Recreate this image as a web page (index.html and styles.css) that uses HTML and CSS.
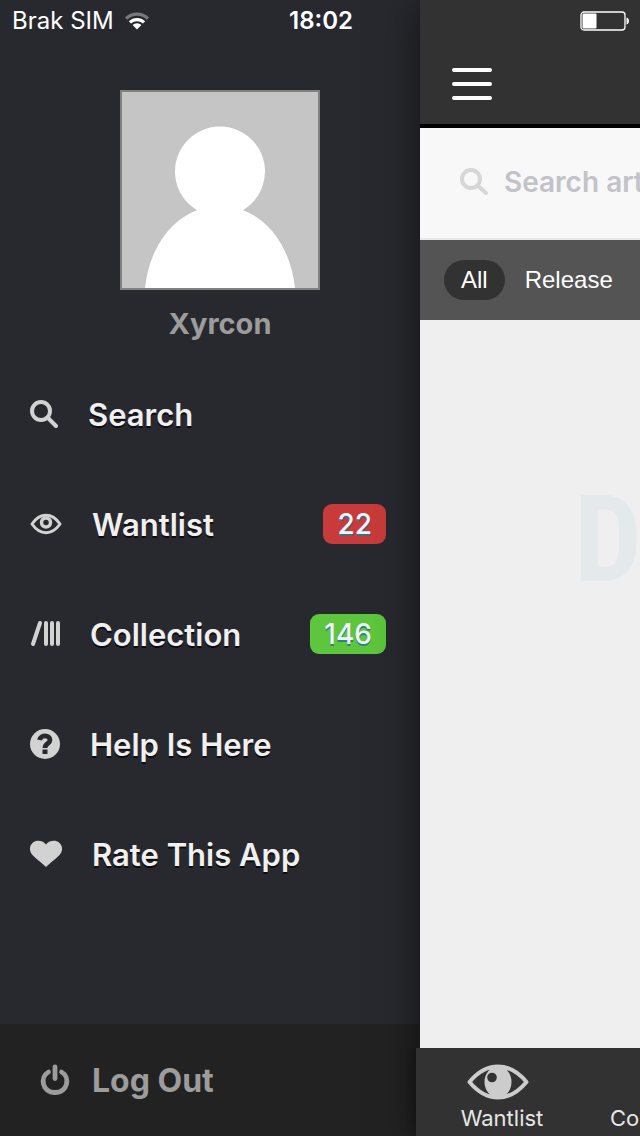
FILE: index.html
```html
<!DOCTYPE html>
<html lang="en">

<head>
  <meta charset="utf-8">
  <meta name="viewport" content="width=device-width, initial-scale=1">
  <title>Discogs</title>
  <link rel="stylesheet" href="styles.css">
</head>

<body>

  <div class="app">

    <!-- Status bar -->
    <div class="statusbar">
      <div class="carrier">
        <span>Brak SIM</span>
        <svg width="26" height="20" viewBox="0 0 26 20">
          <path d="M1 6.500a17 17 0 0 1 24 0l-2.200 2.200a13.900 13.900 0 0 0-19.600 0z" fill="#77787b"/>
          <path d="M4.800 10.300a11.600 11.600 0 0 1 16.400 0l-2.300 2.300a8.300 8.300 0 0 0-11.800 0z" fill="#fff"/>
          <path d="M8.600 14.100a6.200 6.200 0 0 1 8.800 0L13 18.500z" fill="#fff"/>
        </svg>
      </div>
      <span class="time">18:02</span>
      <svg class="battery" width="50" height="20" viewBox="0 0 50 20">
        <rect x="1" y="1" width="44" height="18" rx="3" fill="none" stroke="#fff" stroke-width="1.300"/>
        <rect x="2.500" y="2.500" width="14" height="15" rx="1" fill="#fff"/>
        <path d="M46.500 6.500c3.300.5 3.300 6.500 0 7z" fill="#fff"/>
      </svg>
    </div>

    <!-- Side menu -->
    <aside class="drawer">
      <div class="profile">
        <svg class="avatar" viewBox="0 0 196 196" role="img" aria-label="Avatar">
          <circle cx="98" cy="79.500" r="45" fill="#fff"/>
          <path d="M23 196C27 157 49 127 76 118h44c27 9 49 39 53 78z" fill="#fff"/>
        </svg>
        <div class="username">Xyrcon</div>
      </div>

      <nav class="menu">
        <a href="#" class="menu-item">
          <svg width="28" height="28" viewBox="0 0 28 28" fill="none" stroke="#d2d2d2" stroke-width="4">
            <circle cx="11" cy="11" r="9"/>
            <path d="M17.500 17.500L26 26" stroke-linecap="round"/>
          </svg>
          <span>Search</span>
        </a>
        <a href="#" class="menu-item">
          <svg width="32" height="22" viewBox="0 0 32 22" fill="none" stroke="#d2d2d2">
            <path d="M2 11C6.500 4.500 11 2.300 16 2.300S25.500 4.500 30 11C25.500 17.500 21 19.700 16 19.700S6.500 17.500 2 11z" stroke-width="3" stroke-linejoin="round"/>
            <circle cx="16" cy="9.500" r="4.500" stroke-width="3.500"/>
          </svg>
          <span>Wantlist</span>
          <span class="badge badge-red">22</span>
        </a>
        <a href="#" class="menu-item">
          <svg width="30" height="28" viewBox="0 0 30 28" fill="none" stroke="#d2d2d2" stroke-width="4">
            <path d="M3 24L10 3" stroke-linecap="round"/>
            <path d="M16 3v21M22 3v21M28 3v21" stroke-linecap="round"/>
          </svg>
          <span>Collection</span>
          <span class="badge badge-green">146</span>
        </a>
        <a href="#" class="menu-item">
          <svg width="30" height="30" viewBox="0 0 30 30">
            <circle cx="15" cy="15" r="15" fill="#d2d2d2"/>
            <path d="M9.500 11C10.500 5.500 20 5.500 20 11c0 3.800-5 3.200-5 8" fill="none" stroke="#28292e" stroke-width="4.800"/>
            <path d="M12.500 20.500h5v4.500h-5z" fill="#28292e"/>
          </svg>
          <span>Help Is Here</span>
        </a>
        <a href="#" class="menu-item">
          <svg width="32" height="28" viewBox="0 0 32 28">
            <path d="M16 4.500C19.500 0 26 0 29 2.500c4 3.300 4 8.500.5 12.500C26.500 18.500 20 23 16 27 12 23 5.500 18.500 2.500 15-1 11-1 5.800 3 2.500 6 0 12.500 0 16 4.500z" fill="#d2d2d2"/>
          </svg>
          <span>Rate This App</span>
        </a>
      </nav>

      <button type="button" class="logout">
        <svg width="30" height="32" viewBox="0 0 30 32" fill="none" stroke="#9c9c9c" stroke-width="4.800" stroke-linecap="round">
          <path d="M8.500 8C-.5 13 2 28.500 15 28.500S30.500 13 21.500 8"/>
          <path d="M15 3v11.500"/>
        </svg>
        <span>Log Out</span>
      </button>
    </aside>

    <!-- Main screen, pushed to the right by the menu -->
    <main class="screen">
      <header class="topbar">
        <button type="button" class="hamburger" aria-label="Menu">
          <span></span>
          <span></span>
          <span></span>
        </button>
      </header>

      <form class="search">
        <label for="query">
          <svg width="30" height="28" viewBox="0 0 30 28" fill="none" stroke="#d6d6d6" stroke-width="4">
            <circle cx="12" cy="11" r="9"/>
            <path d="M18.500 17.500L27 25" stroke-linecap="round"/>
          </svg>
        </label>
        <input type="text" id="query" aria-label="Search" placeholder="Search artists, albums and more">
      </form>

      <div class="filters">
        <button type="button" class="filter active">All</button>
        <button type="button" class="filter">Release</button>
      </div>

      <div class="results">
        <div class="watermark">Discogs</div>
      </div>

      <nav class="tabbar">
        <a href="#" class="tab">
          <svg width="70" height="36" viewBox="0 0 70 36">
            <path d="M2.500 18C12 6.500 21 2.500 31 2.500S50 6.500 59.500 18C50 29.500 41 33.500 31 33.500S12 29.500 2.500 18z" fill="none" stroke="#ccc" stroke-width="4" stroke-linejoin="round"/>
            <ellipse cx="31" cy="18" rx="13.500" ry="15.500" fill="#ccc"/>
            <circle cx="25" cy="13.500" r="4.800" fill="#323232"/>
          </svg>
          <span>Wantlist</span>
        </a>
        <a href="#" class="tab">
          <span>Collection</span>
        </a>
      </nav>
    </main>

  </div>

</body>

</html>
```

FILE: styles.css
```css
* {
  box-sizing: border-box;
}

body {
  margin: 0;
  font-family: Inter, "Liberation Sans", sans-serif;
  background-color: #28292e;
}

a {
  color: inherit;
  text-decoration: none;
}

button {
  border: none;
  font-family: inherit;
  cursor: pointer;
}

svg {
  display: block;
  flex: none;
}

.app {
  position: relative;
  display: flex;
  min-height: 100vh;
  overflow: hidden;
}

/* Status bar lies over both the menu and the screen */
.statusbar {
  position: absolute;
  top: 0;
  left: 0;
  right: 0;
  z-index: 2;
  display: grid;
  grid-template-columns: 1fr auto 1fr;
  align-items: center;
  height: 41px;
  padding: 0 10px 0 12px;
  color: #fff;
  font-size: 24px;
}

.carrier {
  display: flex;
  align-items: center;
  gap: 10px;
}

.time {
  font-weight: 600;
}

.battery {
  justify-self: end;
}

/* Side menu */
.drawer {
  display: flex;
  flex-direction: column;
  flex: none;
  width: 420px;
  background-color: #28292e;
}

.profile {
  padding: 90px 0 0 20px;
  text-align: center;
}

.avatar {
  width: 200px;
  height: 200px;
  margin: 0 auto;
  border: 2px solid #808080;
  background-color: #c5c5c5;
}

.username {
  margin: 14px 0 15px;
  color: #9c9c9c;
  font-size: 29px;
  font-weight: 700;
  line-height: 40px;
}

.menu-item {
  display: flex;
  align-items: center;
  gap: 30px;
  height: 110px;
  padding: 0 34px 0 30px;
  color: #f0f0f0;
  font-size: 31px;
  font-weight: 600;
  text-shadow: 0 2px 0 #0c0c0e;
}

.badge {
  margin-left: auto;
  padding: 0 14px;
  border-radius: 9px;
  color: #eef4fa;
  font-size: 28px;
  font-weight: 500;
  line-height: 40px;
}

.badge-red {
  background-color: #c93a3a;
  text-shadow: 0 2px 0 #3a7088;
}

.badge-green {
  background-color: #5dc63d;
  text-shadow: 0 2px 0 #2d8478;
}

.logout {
  display: flex;
  align-items: center;
  gap: 22px;
  height: 112px;
  margin-top: auto;
  padding: 0 40px;
  background-color: #222;
  color: #9c9c9c;
  font-size: 32px;
  font-weight: 700;
}

/* Main screen */
.screen {
  display: flex;
  flex-direction: column;
  flex: 0 0 100%;
  min-width: 0;
  background-color: #efefef;
  box-shadow: 0 0 40px rgba(0, 0, 0, 0.55);
}

.topbar {
  height: 128px;
  padding: 62px 26px 0;
  border-bottom: 4px solid #000;
  background-color: #323232;
}

.hamburger {
  display: flex;
  flex-direction: column;
  gap: 10px;
  padding: 6px;
  background: none;
}

.hamburger span {
  width: 40px;
  height: 4px;
  border-radius: 2px;
  background-color: #fff;
}

.search {
  display: flex;
  align-items: center;
  gap: 15px;
  height: 112px;
  padding: 0 39px 2px;
  border-bottom: 2px solid #e9e9eb;
  background-color: #f8f8f8;
}

.search input {
  flex: 1;
  min-width: 0;
  padding: 0;
  border: none;
  background: none;
  font-family: inherit;
  font-size: 28px;
  font-weight: 600;
}

.search input::placeholder {
  color: #c3c2c9;
}

.filters {
  display: flex;
  align-items: center;
  gap: 3px;
  height: 80px;
  padding: 0 24px;
  background-color: #545454;
}

.filter {
  height: 40px;
  padding: 0 17px;
  border-radius: 20px;
  background: none;
  color: #fff;
  font-family: "Liberation Sans", Arial, sans-serif;
  font-size: 24px;
}

.filter.active {
  background-color: #323232;
}

.results {
  flex: 1;
  padding-top: 160px;
}

.watermark {
  padding-left: 154px;
  color: #e4e9ec;
  font-family: "Roboto Condensed", Roboto, sans-serif;
  font-size: 120px;
  font-weight: 700;
  line-height: 120px;
}

.tabbar {
  display: flex;
  height: 88px;
  margin: 0 -4px;
  padding: 0 2px 0 6px;
  background-color: #323232;
  box-shadow: 0 0 14px rgba(0, 0, 0, 0.4);
  clip-path: inset(0 0 0 -20px);
}

.tab {
  display: flex;
  flex-direction: column;
  align-items: center;
  justify-content: flex-end;
  gap: 4px;
  width: 25%;
  padding-bottom: 4px;
  color: #e6e6e6;
  font-size: 22px;
  line-height: 28px;
}
```
